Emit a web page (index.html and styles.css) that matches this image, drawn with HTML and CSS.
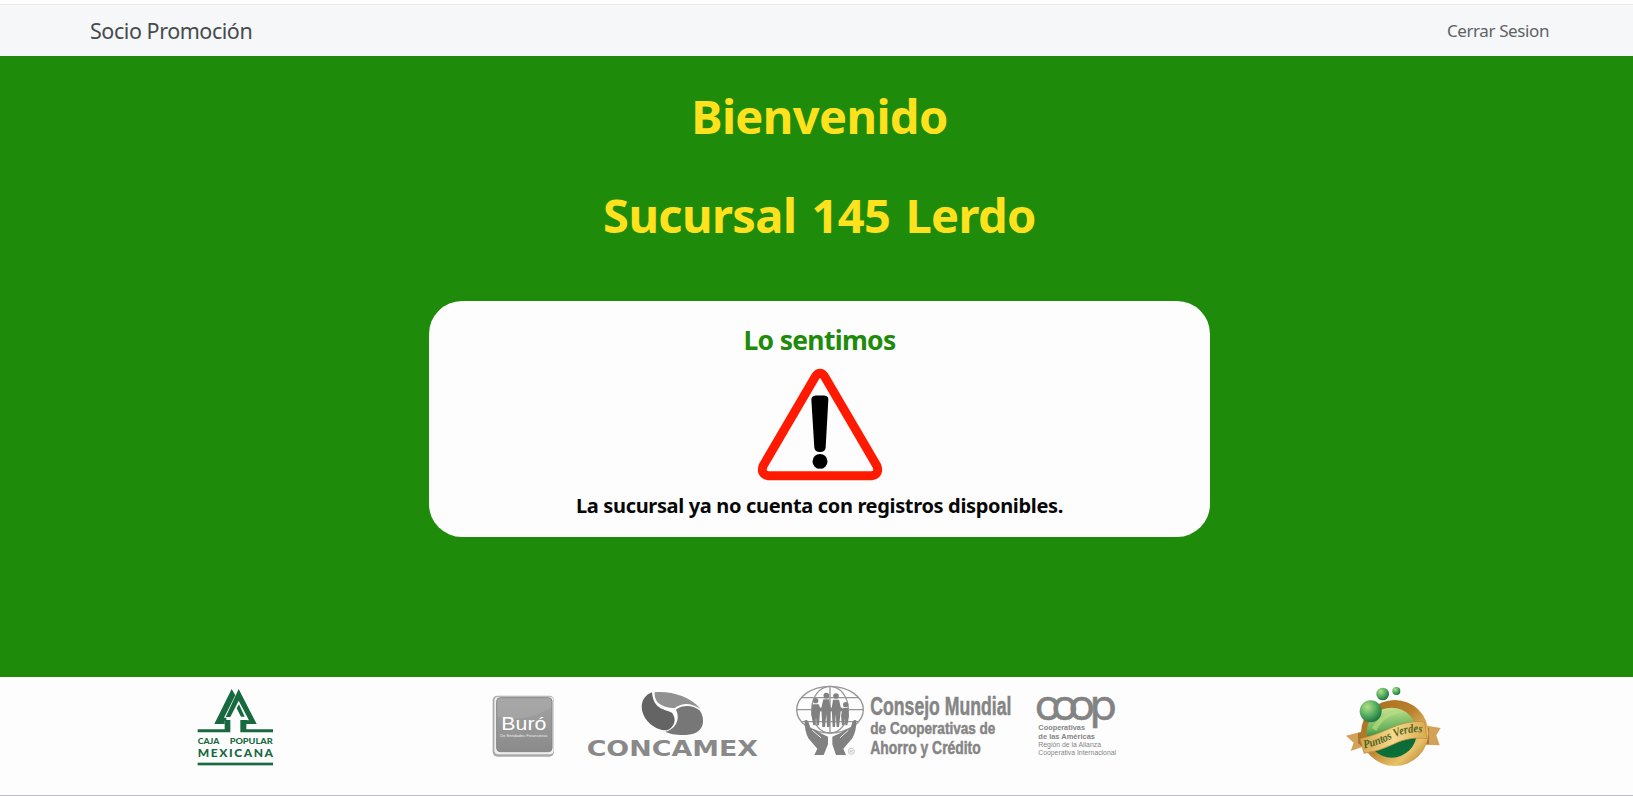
FILE: index.html
```html
<!DOCTYPE html>
<html lang="es">
<head>
<meta charset="utf-8">
<title>Socio Promoción</title>
<link rel="stylesheet" href="styles.css">
</head>
<body>
<header class="navbar">
  <span class="brand">Socio Promoción</span>
  <a class="logout">Cerrar Sesion</a>
</header>
<main class="content">
  <h1 class="title welcome">Bienvenido</h1>
  <h1 class="title branch">Sucursal 145 Lerdo</h1>
  <section class="card">
    <h2 class="card-title">Lo sentimos</h2>
    <svg class="warning" viewBox="50 38 378 340">
      <path d="M226 62 Q239 46 252 62 L410 332 Q419 357 396 362 H82 Q59 357 68 332 Z" fill="none" stroke="#ff1a00" stroke-width="27" stroke-linejoin="round"/>
      <path d="M226 121 H252 Q265 122 264 134 L256 278 Q254 291 239 291 Q224 291 222 278 L213 134 Q213 122 226 121 Z"/>
      <circle cx="239" cy="319" r="22.5"/>
    </svg>
    <p class="message">La sucursal ya no cuenta con registros disponibles.</p>
  </section>
</main>
<footer class="footer">
  <svg class="logo caja" viewBox="0 21 330 354">
    <g fill="#17693f">
      <path d="M155 57 L166 76 L132 143 H139 V152 H134 V162 H103 Z"/>
      <path d="M176 57 L230 162 H199 V178 H279 V187 H181 V150 H195 L207 151 L176 92 L151 141 H137 Z"/>
      <path d="M170 115 L177 103 L194 140 H183 Z"/>
      <path d="M134 150 H151 V187 H53 V178 H134 Z"/>
      <rect x="53" y="278" width="226" height="8"/>
      <text class="caja-name" x="53" y="222" font-size="25" textLength="65" lengthAdjust="spacingAndGlyphs">CAJA</text>
      <text class="caja-name" x="149" y="222" font-size="25" textLength="129" lengthAdjust="spacingAndGlyphs">POPULAR</text>
      <text class="caja-name" x="53" y="262" font-size="36" textLength="226" lengthAdjust="spacing">MEXICANA</text>
    </g>
  </svg>
  <svg class="logo buro" viewBox="0 -9 270 354">
    <defs>
      <linearGradient id="buroFill" x2="0" y2="1"><stop offset="0" stop-color="#a3a3a3"/><stop offset=".5" stop-color="#989898"/><stop offset="1" stop-color="#8a8a8a"/></linearGradient>
    </defs>
    <rect x="38" y="47" width="184" height="183" rx="14" fill="#aaa"/>
    <rect x="43" y="50" width="178" height="173" rx="12" fill="#eee"/>
    <rect x="50" y="53" width="166" height="162" rx="11" fill="url(#buroFill)" stroke="#858585" stroke-width="3"/>
    <path d="M52 110 Q140 130 214 82 V65 Q214 55 204 55 H62 Q52 55 52 65 Z" fill="#aaa" opacity=".6"/>
    <text class="sans" x="64" y="150" font-size="57" fill="#fff" textLength="135" lengthAdjust="spacingAndGlyphs">Buró</text>
    <text class="sans" x="61" y="172" font-size="13" fill="#eee" textLength="142" lengthAdjust="spacingAndGlyphs">De Entidades Financieras</text>
  </svg>
  <svg class="logo concamex" viewBox="270 -9 600 354">
    <path d="M516 37 C480 50 476 93 504 125 C523 145 546 152 562 151 C582 140 592 120 576 98 C550 87 520 87 516 37 Z" fill="#646464"/>
    <path d="M524 37 C570 32 634 50 661 87 C630 65 604 69 583 85 C550 82 522 72 524 37 Z" fill="#919191"/>
    <path d="M588 89 C610 72 643 77 660 92 C675 115 674 151 640 161 C612 169 573 164 556 155 C587 147 602 118 588 89 Z" fill="#777"/>
    <text class="wide" x="320" y="228" font-size="64" fill="#898989" textLength="514" lengthAdjust="spacingAndGlyphs">CONCAMEX</text>
  </svg>
  <svg class="logo consejo" viewBox="0 6 720 354">
    <g fill="none" stroke="#969696" stroke-width="4">
      <ellipse cx="135" cy="104" rx="100" ry="70"/>
      <ellipse cx="135" cy="104" rx="55" ry="70"/>
      <path d="M135 34 V174 M35 104 H235 M51 68 H219 M51 140 H219"/>
    </g>
    <g fill="#818181">
      <circle cx="92" cy="77" r="8"/><circle cx="124" cy="62" r="8.500"/><circle cx="153" cy="63" r="8.500"/><circle cx="182" cy="89" r="8"/>
      <path d="M82 88 H101 L106 100 L102 151 H95 L93 128 L91 151 H85 L79 118 Z"/>
      <path d="M115 73 H132 L137 98 L134 156 H126 L124 118 L120 156 H112 L109 98 Z"/>
      <path d="M144 74 H162 L168 100 L162 156 H155 L152 118 L150 156 H143 L140 100 Z"/>
      <path d="M173 99 H189 L192 123 L187 151 H181 L180 130 L177 151 H171 L168 122 Z"/>
      <path d="M100 98 H172 V109 H100 Z"/>
      <path d="M59 136 Q69 132 72 146 L77 160 Q88 161 101 172 L129 185 V208 L116 240 H88 L97 221 L70 190 Q58 167 59 136 Z"/>
      <path d="M214 136 Q204 132 201 146 L196 160 Q184 161 171 172 L142 185 V208 L153 240 H183 L175 221 L202 190 Q215 167 214 136 Z"/>
    </g>
    <path d="M82 166 L108 188 M190 166 L165 188" stroke="#eee" stroke-width="3"/>
    <circle cx="199" cy="229" r="9" fill="none" stroke="#aaa" stroke-width="2"/>
    <text class="sans" x="194" y="234" font-size="13" fill="#aaa">R</text>
    <g class="consejo-name">
      <text transform="translate(256 119) scale(.717 1)" font-size="76" textLength="590" lengthAdjust="spacingAndGlyphs">Consejo Mundial</text>
      <text transform="translate(256 177) scale(.8 1)" font-size="51" textLength="469" lengthAdjust="spacingAndGlyphs">de Cooperativas de</text>
      <text transform="translate(256 236) scale(.8 1)" font-size="54" textLength="414" lengthAdjust="spacingAndGlyphs">Ahorro y Crédito</text>
    </g>
  </svg>
  <svg class="logo coop" viewBox="15 -9 315 354">
    <text class="coop-mark" transform="translate(44 121) scale(1.08 1)" x="0 47 94 153" y="0" font-size="123">coop</text>
    <g class="sans" fill="#858585">
      <text x="55" y="151" font-size="20" font-weight="bold" textLength="140" lengthAdjust="spacingAndGlyphs">Cooperativas</text>
      <text x="55" y="177" font-size="20" font-weight="bold" textLength="170" lengthAdjust="spacingAndGlyphs">de las Américas</text>
      <text x="55" y="201" font-size="19" textLength="188" lengthAdjust="spacingAndGlyphs">Región de la Alianza</text>
      <text x="55" y="226" font-size="19" textLength="233" lengthAdjust="spacingAndGlyphs">Cooperativa Internacional</text>
    </g>
  </svg>
  <svg class="logo puntos" viewBox="0 21 390 354">
    <defs>
      <radialGradient id="ball" cx=".35" cy=".3" r=".8"><stop offset="0" stop-color="#b2df87"/><stop offset=".5" stop-color="#55ad60"/><stop offset="1" stop-color="#116637"/></radialGradient>
      <linearGradient id="gold" x2="1" y2="1"><stop offset="0" stop-color="#a66c1f"/><stop offset=".45" stop-color="#b87f2c"/><stop offset=".75" stop-color="#e8c36a"/><stop offset="1" stop-color="#a5681e"/></linearGradient>
      <linearGradient id="orb" x1=".5" x2=".6" y2="1"><stop offset="0" stop-color="#c6e390"/><stop offset=".4" stop-color="#67b35c"/><stop offset=".65" stop-color="#0c6936"/><stop offset="1" stop-color="#0b7139"/></linearGradient>
      <linearGradient id="ribbon"><stop offset="0" stop-color="#d6a64c"/><stop offset=".5" stop-color="#f5d98c"/><stop offset="1" stop-color="#d9ad50"/></linearGradient>
    </defs>
    <path d="M48 197 L99 184 L112 226 L62 243 L71 218 Z M283 166 L332 174 L319 196 L329 226 L278 224 Z" fill="#d3a257"/>
    <path d="M84 190 L105 182 V236 L84 220 Z M281 169 L297 174 V222 L278 224 Z" fill="#a97532"/>
    <ellipse cx="194" cy="189" rx="101" ry="99" fill="url(#gold)"/>
    <circle cx="185" cy="188" r="75" fill="url(#orb)"/>
    <path d="M125 174 Q166 116 228 126 Q164 130 139 183 Z" fill="#bfdd81" opacity=".6"/>
    <path d="M90 207 Q140 194 181 175 Q237 149 284 156 L291 206 Q240 197 187 224 Q147 244 102 250 Z" fill="url(#ribbon)" stroke="#b88535" stroke-width="2"/>
    <path id="ribbonLine" d="M103 235 Q143 227 185 206 Q237 180 287 189" fill="none"/>
    <text class="ribbon-name"><textPath href="#ribbonLine" textLength="182" lengthAdjust="spacingAndGlyphs">Puntos Verdes</textPath></text>
    <circle cx="122" cy="124" r="33" fill="url(#ball)"/>
    <circle cx="158" cy="72" r="19" fill="url(#ball)"/>
    <circle cx="199" cy="63" r="12" fill="url(#ball)"/>
  </svg>
</footer>
</body>
</html>
```
FILE: styles.css
```css
* { box-sizing: border-box; }
body {
  margin: 0;
  height: 796px;
  display: flex;
  flex-direction: column;
  overflow: hidden;
  background: #fdfdfd;
  font-family: "Noto Sans", "Open Sans", sans-serif;
}
.navbar {
  height: 52px;
  margin-top: 4px;
  padding: 0 84px 1px 90px;
  display: flex;
  align-items: center;
  justify-content: space-between;
  border-top: 1px solid #eae9ea;
  background: #f5f7f9;
  white-space: nowrap;
}
.brand { font-size: 21.5px; letter-spacing: -0.45px; color: #484b4e; }
.logout { font-size: 17px; letter-spacing: -0.4px; color: #5f6265; }
.content {
  height: 621px;
  display: flex;
  flex-direction: column;
  align-items: center;
  padding-left: 6px;
  background: #1e8c0a;
}
.title {
  margin: 0;
  height: 66px;
  line-height: 66px;
  font-size: 47px;
  font-weight: 700;
  color: #ffe11e;
  white-space: nowrap;
}
.welcome { margin-top: 27px; letter-spacing: -0.6px; }
.branch { margin-top: 33px; letter-spacing: -0.6px; word-spacing: 3.5px; }
.card {
  width: 781px;
  height: 236px;
  margin-top: 53px;
  display: flex;
  flex-direction: column;
  align-items: center;
  border-radius: 33px;
  background: #fdfdfd;
}
.card-title {
  margin: 21px 0 0;
  height: 36px;
  line-height: 36px;
  font-size: 26.5px;
  letter-spacing: -0.7px;
  color: #1e8c0a;
}
.warning { display: block; width: 126px; height: 113px; margin-top: 10px; }
.message {
  margin: 10px 0 0;
  line-height: 30px;
  font-size: 20px;
  font-weight: 700;
  letter-spacing: -0.34px;
  color: #080808;
  white-space: nowrap;
}
.footer {
  height: 119px;
  display: flex;
  padding-left: 180px;
  border-bottom: 1px solid #bdbcc9;
  background: #fdfdfd;
}
.logo { display: block; flex: none; height: 118px; }
.caja { width: 110px; margin-right: 190px; }
.buro { width: 90px; }
.concamex { width: 200px; margin-right: 15px; }
.consejo { width: 240px; }
.coop { width: 105px; margin-right: 200px; }
.puntos { width: 130px; }
.sans { font-family: "Liberation Sans", Arial, sans-serif; }
.caja-name { font-family: Lato, sans-serif; font-weight: 900; }
.wide { font-family: "DejaVu Sans", sans-serif; font-weight: 700; }
.consejo-name {
  font-family: "Liberation Sans", Arial, sans-serif;
  font-weight: 700;
  fill: #858585;
  stroke: #858585;
  stroke-width: 1.5px;
}
.coop-mark {
  font-family: Inter, sans-serif;
  font-weight: 400;
  fill: #838383;
  stroke: #838383;
  stroke-width: 1.5px;
}
.ribbon-name {
  font-family: "Liberation Serif", serif;
  font-style: italic;
  font-weight: 700;
  font-size: 36px;
  fill: #4d6424;
}
```
